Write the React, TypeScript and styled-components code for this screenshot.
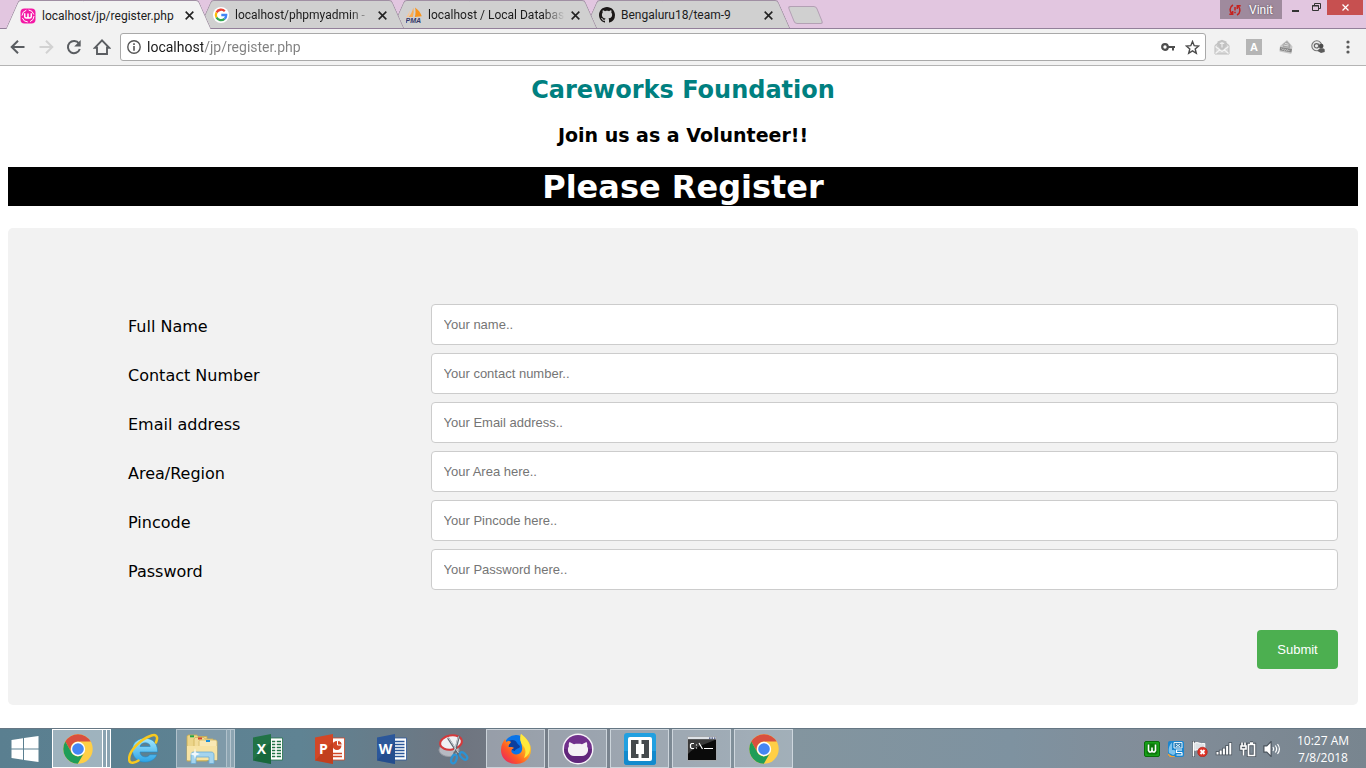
import React from 'react';
import styled, { createGlobalStyle, css } from 'styled-components';

const chromeFont = `Roboto, 'Open Sans', sans-serif`;
const systemFont = `'Open Sans', 'Noto Sans', sans-serif`;

const GlobalStyle = createGlobalStyle`
  *, *::before, *::after { box-sizing: border-box; }
  body { margin: 0; background: #fff; }
  button { padding: 0; border: 0; background: none; color: inherit; font: inherit; }
  svg { display: block; flex: none; }
`;

const Screen = styled.div`
  display: flex;
  flex-direction: column;
  min-height: 100vh;
`;

/* ---------- browser frame ---------- */

const TabStrip = styled.header`
  display: flex;
  align-items: flex-end;
  height: 29px;
  padding-left: 12px;
  background: #e2c6e0;
  border-bottom: 1px solid #93809a;
`;

const Tab = styled.div<{ $active?: boolean; $level: number }>`
  position: relative;
  isolation: isolate;
  z-index: ${(p) => p.$level};
  display: flex;
  align-items: center;
  flex: 0 1 193px;
  min-width: 60px;
  height: ${(p) => (p.$active ? '29px' : '28px')};
  margin-bottom: ${(p) => (p.$active ? '-1px' : '0')};
  padding: 2px 10px 0 8px;

  &::before,
  &::after {
    content: '';
    position: absolute;
    z-index: -1;
    top: 0;
    bottom: 0;
    width: 60%;
    background: ${(p) => (p.$active ? '#f2f2f2' : '#d0d0d0')};
    border: 1px solid #a08fa3;
    border-bottom: 0;
  }
  &::before {
    left: 0;
    border-right: 0;
    border-top-left-radius: 3px;
    transform: skewX(-24deg);
  }
  &::after {
    right: 0;
    border-left: 0;
    border-top-right-radius: 3px;
    transform: skewX(24deg);
  }
`;

const TabTitle = styled.button<{ $faded?: boolean }>`
  flex: 1;
  min-width: 0;
  margin: 0 4px 0 6px;
  overflow: hidden;
  white-space: nowrap;
  text-align: left;
  font: 12px/18px ${chromeFont};
  color: #1c1c1c;
  ${(p) => p.$faded && 'mask-image: linear-gradient(to right, #000 84%, transparent);'}
`;

const IconButton = styled.button<{ $size?: number }>`
  display: grid;
  place-items: center;
  flex: none;
  width: ${(p) => p.$size ?? 28}px;
  height: 28px;
`;

const NewTab = styled.button`
  width: 29px;
  height: 18px;
  margin: 0 0 4px 7px;
  background: #d0d0d0;
  border: 1px solid #b3a0b4;
  border-radius: 3px;
  transform: skewX(22deg);
`;

const WindowControls = styled.div`
  display: flex;
  align-self: flex-start;
  margin-left: auto;
  padding-right: 3px;
`;

const UserButton = styled.button`
  display: flex;
  align-items: center;
  justify-content: center;
  gap: 8px;
  width: 62px;
  height: 19px;
  margin-right: 3px;
  background: #9f8a9d;
  font: 12px/16px ${chromeFont};
  color: #fff;
  text-shadow: 0 0 2px #4a3c49;
`;

const WindowButton = styled.button<{ $close?: boolean }>`
  display: grid;
  place-items: center;
  width: ${(p) => (p.$close ? 36 : 21)}px;
  height: 15px;
  background: ${(p) => (p.$close ? '#c75050' : 'transparent')};
`;

const Toolbar = styled.nav`
  display: flex;
  align-items: center;
  height: 37px;
  padding: 0 6px 0 4px;
  background: #f2f2f2;
  border-bottom: 1px solid #b4b4b4;
`;

const AddressBar = styled.label`
  display: flex;
  align-items: center;
  flex: 1;
  min-width: 0;
  height: 28px;
  margin-left: 4px;
  padding: 0 5px 0 6px;
  background: #fff;
  border: 1px solid #a9a9a9;
  border-radius: 3px;
`;

const AddressInput = styled.input`
  flex: 1;
  min-width: 0;
  margin-left: 6px;
  padding: 0;
  border: 0;
  outline: 0;
  font: 14px/22px ${chromeFont};
  color: transparent;
  background: linear-gradient(to right, #1a1a1a 56px, #808080 56px);
  background-clip: text;
`;

const Extensions = styled.div`
  display: flex;
  align-items: center;
  gap: 4px;
  margin-left: 2px;
`;

/* ---------- page ---------- */

const Page = styled.main`
  flex: 1;
  padding: 8px 8px 23px;
  font-family: Verdana, 'DejaVu Sans', sans-serif;
  color: #000;
`;

const Brand = styled.h2`
  margin: 0 0 16px;
  font-size: 24px;
  line-height: 32px;
  text-align: center;
  color: #008080;
`;

const Tagline = styled.h3`
  margin: 0 0 18px;
  font-size: 19px;
  line-height: 27px;
  text-align: center;
`;

const Banner = styled.h1`
  margin: 0 0 22px;
  padding-top: 2px;
  font-size: 32px;
  line-height: 37px;
  text-align: center;
  color: #fff;
  background: #000;
`;

const Form = styled.form`
  display: flex;
  flex-direction: column;
  gap: 8px;
  padding: 76px 20px 36px;
  background: #f2f2f2;
  border-radius: 5px;
`;

const Field = styled.div`
  display: grid;
  grid-template-columns: 1fr 3fr;
  margin-left: 100px;
`;

const FieldLabel = styled.label`
  padding-top: 12px;
  font-size: 16px;
  line-height: 22px;
`;

const FieldInput = styled.input`
  width: 100%;
  height: 41px;
  padding: 0 12px;
  border: 1px solid #ccc;
  border-radius: 4px;
  background: #fff;
  font: 13px/15px 'Liberation Sans', Arial, sans-serif;
  color: #000;
  &::placeholder { color: #757575; }
`;

const Submit = styled.button`
  align-self: flex-end;
  width: 81px;
  height: 39px;
  margin-top: 32px;
  border-radius: 4px;
  background: #4caf50;
  color: #fff;
  font: 13px/15px 'Liberation Sans', Arial, sans-serif;
`;

/* ---------- taskbar ---------- */

const Taskbar = styled.footer`
  display: flex;
  align-items: stretch;
  height: 40px;
  border-top: 1px solid #667784;
  background: linear-gradient(to right, #5a7f90 0%, #5f8393 22%, #6f7580 34%, #77808b 42%, #83959f 58%, #7e92a0 74%, #828d99 84%, #78858f 100%);
`;

const StartButton = styled.button`
  display: grid;
  place-items: center;
  width: 50px;
  margin-right: 2px;
`;

const Apps = styled.div`
  display: flex;
  gap: 3px;
`;

const framed = css`
  background: rgba(205, 212, 222, 0.42);
  border: 1px solid rgba(225, 232, 238, 0.7);
`;

const TaskButton = styled.button<{ $state?: 'open' | 'stack' | 'front' }>`
  display: flex;
  width: 59px;
  height: 39px;

  > span {
    display: grid;
    place-items: center;
    flex: 1;
    height: 39px;
    ${(p) => p.$state && framed}
    ${(p) => p.$state === 'front' && 'background: rgba(225, 230, 236, 0.5); border-color: #fff;'}
    ${(p) => p.$state === 'stack' && 'background: rgba(205, 212, 222, 0.3); border-color: rgba(225, 232, 238, 0.5);'}
  }
  > i {
    width: 4px;
    ${framed}
    border-left: 0;
    ${(p) => p.$state === 'front' && 'border-color: #fff;'}
    ${(p) => p.$state === 'stack' && 'border-color: rgba(225, 232, 238, 0.5);'}
  }
`;

const Tray = styled.div`
  display: flex;
  align-items: center;
  margin-left: auto;
`;

const Clock = styled.time`
  width: 78px;
  margin-right: 4px;
  font: 12px/17px ${systemFont};
  text-align: center;
  color: #fff;
`;

/* ---------- drawings ---------- */

const WampFavicon = () => (
  <svg width="16" height="16" viewBox="0 0 16 16">
    <rect x=".5" y=".5" width="15" height="15" rx="4" fill="#f417a5" />
    <circle cx="8" cy="8" r="6" fill="none" stroke="#fff" strokeWidth="1" strokeDasharray="7 2.4" />
    <path d="M4.7 5.3v3.2c0 1.9 3.3 1.9 3.3 0V5.6v2.9c0 1.9 3.3 1.9 3.3 0V5.3" fill="none" stroke="#fff" strokeWidth="1.5" />
  </svg>
);

const GoogleFavicon = () => (
  <svg width="16" height="16" viewBox="0 0 16 16">
    <circle cx="8" cy="8" r="8" fill="#fff" />
    <g fill="none" strokeWidth="2.3">
      <path d="M11.8 4.2A5.2 5.2 0 0 0 3.5 5.5" stroke="#ea4335" />
      <path d="M3.5 5.5a5.2 5.2 0 0 0 0 5" stroke="#fbbc05" />
      <path d="M3.5 10.5a5.2 5.2 0 0 0 8 1.4" stroke="#34a853" />
      <path d="M11.5 11.9A5 5 0 0 0 13.2 8H8.3" stroke="#4285f4" />
    </g>
  </svg>
);

const PmaFavicon = () => (
  <svg width="16" height="16" viewBox="0 0 16 16">
    <path d="M7.200.5c.8 3 .6 6.500-.4 9.500H2.500c2.200-2 4-5.300 4.700-9.500z" fill="#f9ad54" />
    <path d="M9 .5c3.500 2.300 5.800 5.600 6.800 8.800L8.800 10c.9-3 1-6.500.2-9.500z" fill="#f7941d" />
    <path d="M3.600 3.500C3.800 6 3.300 8 2.200 10H.2c1.600-1.800 2.700-4 3.400-6.500z" fill="#fbc592" />
    <text x="-.5" y="16" fontFamily="Liberation Sans" fontSize="7" fontStyle="italic" fontWeight="bold" fill="#33386b">PMA</text>
  </svg>
);

const GithubFavicon = () => (
  <svg width="16" height="16" viewBox="0 0 16 16">
    <path fill="#1b1817" d="M8 0C3.580 0 0 3.580 0 8c0 3.540 2.290 6.530 5.470 7.590.4.070.55-.17.55-.38 0-.19-.01-.82-.01-1.490-2.010.37-2.530-.49-2.690-.94-.09-.23-.48-.94-.82-1.130-.28-.15-.68-.52-.01-.53.63-.01 1.080.58 1.230.82.72 1.210 1.870.87 2.330.66.07-.52.28-.87.51-1.070-1.780-.2-3.640-.89-3.640-3.950 0-.87.31-1.590.82-2.150-.08-.2-.36-1.020.08-2.120 0 0 .67-.21 2.200.82.64-.18 1.320-.27 2-.27s1.360.09 2 .27c1.530-1.040 2.200-.82 2.200-.82.44 1.100.16 1.920.08 2.120.51.56.82 1.270.82 2.150 0 3.070-1.870 3.750-3.650 3.950.29.25.54.73.54 1.480 0 1.070-.01 1.930-.01 2.200 0 .21.15.46.55.38A8.010 8.010 0 0 0 16 8c0-4.420-3.580-8-8-8z" />
  </svg>
);

const Cross = ({ size = 9, color = '#222' }: { size?: number; color?: string }) => (
  <svg width={size} height={size} viewBox="0 0 8 8">
    <path d="M.6.6l6.800 6.800M7.400.6L.6 7.400" stroke={color} strokeWidth="1.400" />
  </svg>
);

const ArrowIcon = ({ forward = false }: { forward?: boolean }) => (
  <svg width="16" height="16" viewBox="0 0 16 16" fill="none" stroke={forward ? '#d2d2d2' : '#5a5d61'} strokeWidth="2">
    {forward ? <path d="M1.500 8h12M8 1.700L14.300 8 8 14.300" /> : <path d="M14.500 8h-12M8 1.700L1.700 8 8 14.300" />}
  </svg>
);

const ReloadIcon = () => (
  <svg width="16" height="16" viewBox="0 0 16 16">
    <path d="M13 4.500A6.100 6.100 0 1 0 13.800 10" fill="none" stroke="#5a5d61" strokeWidth="2" />
    <path d="M14.700 1v6.500H8.200z" fill="#5a5d61" />
  </svg>
);

const HomeIcon = () => (
  <svg width="18" height="18" viewBox="0 0 18 18" fill="none" stroke="#5a5d61" strokeWidth="1.900">
    <path d="M1.800 9.800L9 2.400l7.200 7.400H14v6.200H4V9.800z" />
  </svg>
);

const InfoIcon = () => (
  <svg width="14" height="14" viewBox="0 0 14 14">
    <circle cx="7" cy="7" r="6.200" fill="none" stroke="#555" strokeWidth="1.400" />
    <path d="M6.200 3.300h1.600v1.600H6.200zM6.200 6h1.600v4.700H6.200z" fill="#555" />
  </svg>
);

const KeyIcon = () => (
  <svg width="14" height="10" viewBox="0 0 14 10">
    <circle cx="4" cy="5" r="2.800" fill="none" stroke="#4e4e4e" strokeWidth="2.200" />
    <path d="M7 4h7v2h-1v2.500h-2V6H7z" fill="#4e4e4e" />
  </svg>
);

const StarIcon = () => (
  <svg width="15" height="15" viewBox="0 0 15 15">
    <path d="M7.500 1.500l1.700 4.200 4.500.3-3.500 2.900 1.100 4.400-3.800-2.400-3.800 2.400 1.100-4.400L1.300 6l4.500-.3z" fill="none" stroke="#4a4a4a" strokeWidth="1.400" />
  </svg>
);

const MailBadgeIcon = () => (
  <svg width="16" height="16" viewBox="0 0 16 16">
    <path d="M1 6.500l3-2.500v5l4 2.500L12 9V4l3 2.500V15H1z" fill="#d6d6d6" stroke="#bdbdbd" />
    <path d="M3.500 2.500L8 .8l4.500 1.700C12.500 7 11.500 9.500 8 11 4.500 9.500 3.500 7 3.500 2.500z" fill="#c2c2c2" />
    <path d="M8 3v5.500M5.800 4.300h4.400" stroke="#ededed" strokeWidth="1.200" />
    <path d="M1.500 14.500L6 10.500m8.500 4L10 10.500M1.500 7.500L8 12.500l6.500-5" fill="none" stroke="#f4f4f4" strokeWidth="1.200" />
  </svg>
);

const LetterAIcon = () => (
  <svg width="16" height="16" viewBox="0 0 16 16">
    <rect width="16" height="16" fill="#b5b5b5" />
    <text x="8" y="12" textAnchor="middle" fontFamily="Liberation Sans" fontSize="11" fontWeight="bold" fill="#fff">A</text>
  </svg>
);

const OpenMailIcon = () => (
  <svg width="14" height="16" viewBox="0 0 14 16">
    <path d="M1 7L8 1l5.500 6.500L12.200 15 .5 12.500z" fill="#c9c9c9" />
    <path d="M3.500 5.500L8 2l3.500 4-.5 3-7-1z" fill="#a6a6a6" />
    <path d="M4.500 6l5 1M6 4.300l3.500 1" stroke="#dedede" />
    <path d="M1 8l12 2-.6 3.500L.8 11.300z" fill="#868686" />
    <path d="M2.500 9.300l1 1.500 1-1 1 1.700 1-1.400 1 1.700 1-1.300 1 1.600 1-1.100" fill="none" stroke="#c9c9c9" strokeWidth=".8" />
  </svg>
);

const AtPersonIcon = () => (
  <svg width="14" height="14" viewBox="0 0 14 14">
    <circle cx="5.800" cy="5.800" r="5" fill="#ececec" stroke="#777" strokeWidth="1.100" />
    <circle cx="5.500" cy="5.800" r="2.200" fill="none" stroke="#666" strokeWidth="1.200" />
    <path d="M7.800 3.500v3.700c.3 1.300 2 1 2.500-.5" fill="none" stroke="#6b6b6b" />
    <circle cx="10.200" cy="6" r="2.300" fill="#4c4c4c" />
    <path d="M6.500 11c1-3 6-3.500 7.200-1.500V12l-3.700 1z" fill="#5b5b5b" />
  </svg>
);

const MenuIcon = () => (
  <svg width="4" height="14" viewBox="0 0 4 14" fill="#5a5a5a">
    <circle cx="2" cy="2" r="1.600" /><circle cx="2" cy="7" r="1.600" /><circle cx="2" cy="12" r="1.600" />
  </svg>
);

const SyncErrorIcon = () => (
  <svg width="12" height="12" viewBox="0 0 12 12" fill="none" stroke="#c5221f" strokeWidth="1.500">
    <path d="M4 1C.3 3 .3 7.500 3 10M.3 10.300h3.400V7M8 11c3.700-2 3.700-6.500 1-9M11.700 1.700H8.300V5M6 3v3.500M6 7.800v1.500" />
  </svg>
);

const WindowsLogo = () => (
  <svg width="28" height="26" viewBox="0 0 28 26" fill="#fff">
    <path d="M.5 4L12 2.300v10.200H.5zM13 2.100L27.500 0v12.500H13zM.5 13.500H12v10.200L.5 22zM13 13.500h14.500V26L13 23.900z" />
  </svg>
);

const ChromeLogo = () => (
  <svg width="30" height="30" viewBox="0 0 30 30">
    <circle cx="15" cy="15" r="14.700" fill="#ffcf46" />
    <path d="M2.300 7.600A14.700 14.700 0 0 1 27.700 7.600H15a7.400 7.400 0 0 0-6.500 11z" fill="#d9503f" />
    <path d="M2.300 7.600A14.700 14.700 0 0 0 14.800 29.700l6.500-11.100a7.300 7.300 0 0 1-12.800 0z" fill="#1f9d58" />
    <circle cx="15" cy="15" r="7.200" fill="#fff" />
    <circle cx="15" cy="15" r="5.800" fill="#4586f3" />
  </svg>
);

const ExplorerE = () => (
  <svg width="32" height="32" viewBox="0 0 32 32">
    <defs>
      <linearGradient id="ie" x1="0" y1="0" x2="0" y2="1"><stop offset="0" stopColor="#a5e8fd" /><stop offset="1" stopColor="#2ba3e6" /></linearGradient>
    </defs>
    <path d="M29.500 19H12c.3 5.500 7.500 6.300 9.800 2.700h7C25 32.500 4.800 32 4.300 17 4.100 1.500 30.500.5 29.500 19zM12 13.500h10.200c-.5-5-9.300-5-10.200 0z" fill="url(#ie)" stroke="#2389c8" strokeWidth=".6" />
    <path d="M28 9.500C30.500 4 28.500.8 23.500 2.500 12.500 6-.5 19 1.300 27.500c.8 3.500 5.500 2.300 9.200 0" fill="none" stroke="#f8c91f" strokeWidth="2.500" strokeLinecap="round" />
  </svg>
);

const FolderIcon = () => (
  <svg width="32" height="30" viewBox="0 0 32 30">
    <path d="M1 2.500L2 1h9l1 1.500h9V27H1z" fill="#ecd58a" stroke="#c9a94b" strokeWidth=".8" />
    <path d="M4 2.300h4" stroke="#22a447" strokeWidth="2" />
    <path d="M8 5l1-1.500h9L19 5h8v21H8z" fill="#f2dc9a" stroke="#cfb259" strokeWidth=".8" />
    <path d="M12 4.500h4" stroke="#d6402c" strokeWidth="2" />
    <path d="M13 7.500L14 6h16l1 1.500V26H13z" fill="#f9e8b4" stroke="#d3b863" strokeWidth=".8" />
    <path d="M1 12h30v14H1z" fill="#f7e3a4" />
    <path d="M20 7h4" stroke="#1d8fd8" strokeWidth="2" />
    <path d="M5 29.500V21c0-2 1-3 3-3h17c2 0 3 1 3 3v8.500h-5V23H10v6.500z" fill="#a4d4ee" stroke="#6aabd3" strokeWidth=".8" />
    <path d="M9 14l1 4.500 4 1.500-4 1.500-1 4-1-4L4 20l4-1.500z" fill="#fff" opacity=".85" />
  </svg>
);

const OfficeIcon = ({ letter, dark, base, children }: { letter: string; dark: string; base: string; children: React.ReactNode }) => (
  <svg width="32" height="32" viewBox="0 0 32 32">
    <path d="M16 5h14.500v22H16z" fill="#fff" stroke={base} strokeWidth=".8" />
    {children}
    <path d="M1 4.500L19 1v30L1 27.500z" fill={base} />
    <path d="M1 27.500L19 9v22z" fill={dark} opacity=".45" />
    <text x="9.500" y="21" textAnchor="middle" fontFamily="Open Sans" fontSize="14" fontWeight="bold" fill="#fff">{letter}</text>
  </svg>
);

const ScissorsIcon = () => (
  <svg width="32" height="32" viewBox="0 0 32 32">
    <ellipse cx="11" cy="17" rx="10" ry="6.500" fill="#b7bac2" stroke="#989ba3" />
    <ellipse cx="13" cy="9.500" rx="11" ry="7" fill="#f0f1f4" stroke="#d4393b" strokeWidth="2" transform="rotate(-10 13 9.500)" />
    <path d="M10 5l11 17M21 3l-5 19" stroke="#606973" strokeWidth="2.200" />
    <path d="M10.500 5l10 15M20.500 3.500l-4.500 15" stroke="#dfe3e7" strokeWidth=".8" />
    <ellipse cx="16" cy="26" rx="2.500" ry="4.500" fill="none" stroke="#2b93d4" strokeWidth="2.300" transform="rotate(20 16 26)" />
    <ellipse cx="25.500" cy="23" rx="2.500" ry="4.500" fill="none" stroke="#2b93d4" strokeWidth="2.300" transform="rotate(-45 25.500 23)" />
  </svg>
);

const FirefoxLogo = () => (
  <svg width="32" height="32" viewBox="0 0 32 32">
    <defs>
      <linearGradient id="fx" x1="1" y1="0" x2="0" y2="1"><stop offset="0" stopColor="#fff14a" /><stop offset=".35" stopColor="#ffb01f" /><stop offset=".65" stopColor="#ff5a25" /><stop offset="1" stopColor="#e5156f" /></linearGradient>
    </defs>
    <circle cx="16" cy="14" r="12" fill="#0a74e8" />
    <path d="M9 8c3-2 7-1 8 2 1 2 3 2 3 4-2 2-5 2-5 4l-6-2z" fill="#0b3f9e" />
    <path d="M21 1c4 3 8 7 9.500 12C33 24 25 31 16 31 7 31 1 25 1 17c0-5 2-8 4-11l1.500 3C8 7.500 10 8 11 9c-1 2-3 3-2.500 5 2 0 4-.5 5.500 1-2 1-3 2-2.500 4 2 3.500 8 3 10-.5 2.500-5-2.500-10-.5-17.500z" fill="url(#fx)" />
    <path d="M21 1c4 3 8 7 9 13 .5 5-2 9-6 11 3-7 1-10-1.500-13C20 9 19.500 5 21 1z" fill="#ffe93c" />
  </svg>
);

const GithubDesktopLogo = () => (
  <svg width="32" height="32" viewBox="0 0 32 32">
    <circle cx="16" cy="16" r="15.500" fill="#f6f2f8" />
    <circle cx="16" cy="16" r="14" fill="#71308c" />
    <path d="M2 16a14 14 0 0 0 28 0z" fill="#5b2274" opacity=".7" />
    <path d="M7.500 9l4.500 2.200c2-.6 6-.6 8 0L24.500 9c1 2 .8 3.300.6 4.300C27.500 17 25.500 23 20 23h-8C6.500 23 4.500 17 6.900 13.300 6.700 12 6.500 11 7.500 9z" fill="#f5f1f5" />
  </svg>
);

const BracketsLogo = () => (
  <svg width="32" height="32" viewBox="0 0 32 32">
    <rect width="32" height="32" rx="3" fill="#22a0e0" />
    <path d="M0 18h32v11a3 3 0 0 1-3 3H3a3 3 0 0 1-3-3z" fill="#128acd" />
    <rect x="4" y="4" width="24" height="24" rx="2" fill="#fff" />
    <path d="M14.500 7v4H12v10h2.500v4H7V7zM17.500 7v4H20v10h-2.500v4H25V7z" fill="#454a4d" />
  </svg>
);

const TerminalIcon = () => (
  <svg width="30" height="25" viewBox="0 0 30 25">
    <rect x=".5" y=".5" width="29" height="24" fill="#0a0a0a" stroke="#a3a8ad" />
    <path d="M1 1h28v2.500H1z" fill="#dfe3e8" />
    <path d="M22 2.200h1.500M24.500 2.200H26M27 2.200h1.500" stroke="#3b4b7c" strokeWidth="1.200" />
    <path d="M1 3.500h28C20 8 8 10 1 18z" fill="#3a3a3a" />
    <path d="M7 7.500H4.500L3.500 8.500v3l1 1H7M9.500 8.500v1M9.500 11.500v1M12 7l3.500 6M17 12.500h9" fill="none" stroke="#fff" strokeWidth="1.200" />
  </svg>
);

const WampTray = () => (
  <svg width="24" height="16" viewBox="0 0 24 16">
    <rect x="4.500" y=".5" width="15" height="15" rx="1.500" fill="#18a018" stroke="#0a6c0a" />
    <rect x="6.500" y="2.500" width="11" height="11" rx="2" fill="#0b780b" />
    <path d="M8.500 3.500v6l1 1.500h1.500l1-1.500 1 1.500h1.500l1-1.500v-6M12 6.500v3" fill="none" stroke="#fff" strokeWidth="1.600" />
  </svg>
);

const GraphicsTray = () => (
  <svg width="24" height="16" viewBox="0 0 24 16">
    <rect x="4" width="16" height="16" rx="2" fill="#1b86cf" />
    <path d="M10 1.500h8v5.500h-8z" fill="#2f7fb6" stroke="#e3f2fb" />
    <path d="M12 3l4 3m0-3l-4 3" stroke="#e3f2fb" />
    <path d="M5 12c-1-5 1-9 3-10.500V9h2c2 0 2 5-1 5z" fill="#7fc4ed" />
    <path d="M4.500 13c2 2.500 4 2.500 6 2.500H6c-1 0-1.500-1-1.500-2.500z" fill="#f0a03a" stroke="#f0a03a" />
    <path d="M18 9h-5.500v2.500H18M18 11.500v2.500h-5.500" stroke="#fff" strokeWidth="1.200" fill="none" />
  </svg>
);

const FlagTray = () => (
  <svg width="24" height="16" viewBox="0 0 24 16">
    <path d="M5.500 0v16" stroke="#4c555e" strokeWidth="3" />
    <path d="M5.500.5v15" stroke="#fff" strokeWidth="1.500" />
    <path d="M6.800 2c3-1.500 5 1.500 10 .5v7c-5 1-7-2-10 0z" fill="#dce1e5" stroke="#fff" />
    <circle cx="14.500" cy="11" r="4.800" fill="#dd3327" stroke="#a81e16" strokeWidth=".6" />
    <path d="M12.500 9l4 4m0-4l-4 4" stroke="#fff" strokeWidth="1.800" />
  </svg>
);

const SignalTray = () => (
  <svg width="24" height="16" viewBox="0 0 24 16">
    <path
      d="M4.500 11h2v2.500h-2zM7.700 9.500h2v4h-2zM10.900 7.500h2v6h-2zM14.100 5h2v8.500h-2zM17.300 2h2v11.500h-2z"
      fill="#fff" stroke="#4c555e" strokeWidth="1.600" paintOrder="stroke"
    />
  </svg>
);

const BatteryTray = () => (
  <svg width="24" height="16" viewBox="0 0 24 16" fill="none">
    {[{ c: '#4c555e', w: 3.4 }, { c: '#fff', w: 1.6 }].map(({ c, w }) => (
      <path key={c} d="M6 1.500V5M9 1.500V5M5 5h5v3H5zM7.500 8v6.500M12.500 3.500h6v11h-6zM14 2h3" stroke={c} strokeWidth={w} />
    ))}
  </svg>
);

const SpeakerTray = () => (
  <svg width="24" height="16" viewBox="0 0 24 16" fill="none" stroke="#fff">
    <path d="M4.500 5.500H7L10.500 2v12L7 10.500H4.500z" fill="#fff" stroke="#4c555e" strokeWidth="2.400" paintOrder="stroke" />
    <path d="M13 6c1 1.300 1 2.700 0 4M15.300 4.500c1.700 2.200 1.700 4.800 0 7M17.500 3c2.300 3 2.300 7 0 10" strokeWidth="1.200" />
  </svg>
);

/* ---------- data ---------- */

const tabs = [
  { title: 'localhost/jp/register.php', icon: <WampFavicon /> },
  { title: 'localhost/phpmyadmin -', icon: <GoogleFavicon />, faded: true },
  { title: 'localhost / Local Databas', icon: <PmaFavicon />, faded: true },
  { title: 'Bengaluru18/team-9', icon: <GithubFavicon /> },
];

const fields = [
  { id: 'name', label: 'Full Name', hint: 'Your name..', type: 'text' },
  { id: 'contact', label: 'Contact Number', hint: 'Your contact number..', type: 'text' },
  { id: 'email', label: 'Email address', hint: 'Your Email address..', type: 'text' },
  { id: 'area', label: 'Area/Region', hint: 'Your Area here..', type: 'text' },
  { id: 'pincode', label: 'Pincode', hint: 'Your Pincode here..', type: 'text' },
  { id: 'password', label: 'Password', hint: 'Your Password here..', type: 'password' },
];

const apps: { name: string; icon: React.ReactNode; state?: 'open' | 'stack' | 'front' }[] = [
  { name: 'Chrome', icon: <ChromeLogo />, state: 'front' },
  { name: 'Internet Explorer', icon: <ExplorerE /> },
  { name: 'File Explorer', icon: <FolderIcon />, state: 'stack' },
  {
    name: 'Excel',
    icon: (
      <OfficeIcon letter="X" base="#217346" dark="#0d5a30">
        <path d="M20 8.500h9M20 11.500h9M20 14.500h9M20 17.500h9M20 20.500h9M20 23.500h9" stroke="#217346" strokeWidth="1.600" />
        <path d="M24 6v20" stroke="#fff" strokeWidth="1.500" />
      </OfficeIcon>
    ),
  },
  {
    name: 'PowerPoint',
    icon: (
      <OfficeIcon letter="P" base="#d24726" dark="#b03616">
        <circle cx="23" cy="12.500" r="4.500" fill="#d24726" />
        <path d="M23.500 12V7.500a5 5 0 0 1 4.800 4.500z" fill="#d24726" stroke="#fff" />
        <path d="M19 20.500h9M19 23.500h9" stroke="#d24726" strokeWidth="1.500" />
      </OfficeIcon>
    ),
  },
  {
    name: 'Word',
    icon: (
      <OfficeIcon letter="W" base="#2b579a" dark="#1c4280">
        <path d="M19 8.500h9.500M19 11.500h9.500M19 14.500h9.500M19 17.500h9.500M19 20.500h9.500M19 23.500h9.500" stroke="#2b579a" strokeWidth="1.300" />
      </OfficeIcon>
    ),
  },
  { name: 'Snipping Tool', icon: <ScissorsIcon /> },
  { name: 'Firefox', icon: <FirefoxLogo />, state: 'open' },
  { name: 'GitHub Desktop', icon: <GithubDesktopLogo />, state: 'open' },
  { name: 'Brackets', icon: <BracketsLogo />, state: 'open' },
  { name: 'Command Prompt', icon: <TerminalIcon />, state: 'open' },
  { name: 'Chrome window', icon: <ChromeLogo />, state: 'open' },
];

export default function App() {
  return (
    <Screen>
      <GlobalStyle />
      <TabStrip>
        {tabs.map((tab, i) => (
          <Tab key={tab.title} $active={i === 0} $level={tabs.length - i}>
            {tab.icon}
            <TabTitle type="button" $faded={tab.faded}>{tab.title}</TabTitle>
            <IconButton type="button" $size={12} aria-label="Close tab"><Cross /></IconButton>
          </Tab>
        ))}
        <NewTab type="button" aria-label="New tab" />
        <WindowControls>
          <UserButton type="button"><SyncErrorIcon />Vinit</UserButton>
          <WindowButton type="button" aria-label="Minimize">
            <svg width="7" height="9"><path d="M0 8h7" stroke="#333" strokeWidth="2" /></svg>
          </WindowButton>
          <WindowButton type="button" aria-label="Restore">
            <svg width="9" height="9" fill="none" stroke="#333"><path d="M.5 2.500h6v5h-6zM2.500 2V.5h6v5H7" /><path d="M0 3h7" /></svg>
          </WindowButton>
          <WindowButton type="button" $close aria-label="Close"><Cross size={7} color="#fff" /></WindowButton>
        </WindowControls>
      </TabStrip>

      <Toolbar>
        <IconButton type="button" aria-label="Back"><ArrowIcon /></IconButton>
        <IconButton type="button" aria-label="Forward"><ArrowIcon forward /></IconButton>
        <IconButton type="button" aria-label="Reload"><ReloadIcon /></IconButton>
        <IconButton type="button" aria-label="Home"><HomeIcon /></IconButton>
        <AddressBar>
          <InfoIcon />
          <AddressInput type="text" aria-label="Address" defaultValue="localhost/jp/register.php" />
          <IconButton type="button" $size={32} aria-label="Saved passwords"><KeyIcon /></IconButton>
          <IconButton type="button" $size={16} aria-label="Bookmark"><StarIcon /></IconButton>
        </AddressBar>
        <Extensions>
          <IconButton type="button" aria-label="Mail badge"><MailBadgeIcon /></IconButton>
          <IconButton type="button" aria-label="Extension A"><LetterAIcon /></IconButton>
          <IconButton type="button" aria-label="Open mail"><OpenMailIcon /></IconButton>
          <IconButton type="button" aria-label="Contacts"><AtPersonIcon /></IconButton>
          <IconButton type="button" $size={24} aria-label="Menu"><MenuIcon /></IconButton>
        </Extensions>
      </Toolbar>

      <Page>
        <Brand>Careworks Foundation</Brand>
        <Tagline>Join us as a Volunteer!!</Tagline>
        <Banner>Please Register</Banner>
        <Form onSubmit={(e) => e.preventDefault()}>
          {fields.map((f) => (
            <Field key={f.id}>
              <FieldLabel htmlFor={f.id}>{f.label}</FieldLabel>
              <FieldInput id={f.id} type={f.type} placeholder={f.hint} />
            </Field>
          ))}
          <Submit type="submit">Submit</Submit>
        </Form>
      </Page>

      <Taskbar>
        <StartButton type="button" aria-label="Start"><WindowsLogo /></StartButton>
        <Apps>
          {apps.map((app) => (
            <TaskButton key={app.name} type="button" aria-label={app.name} $state={app.state}>
              <span>{app.icon}</span>
              {app.state && app.state !== 'open' && <><i /><i /></>}
            </TaskButton>
          ))}
        </Apps>
        <Tray>
          <WampTray />
          <GraphicsTray />
          <FlagTray />
          <SignalTray />
          <BatteryTray />
          <SpeakerTray />
          <Clock>10:27 AM<br />7/8/2018</Clock>
        </Tray>
      </Taskbar>
    </Screen>
  );
}
